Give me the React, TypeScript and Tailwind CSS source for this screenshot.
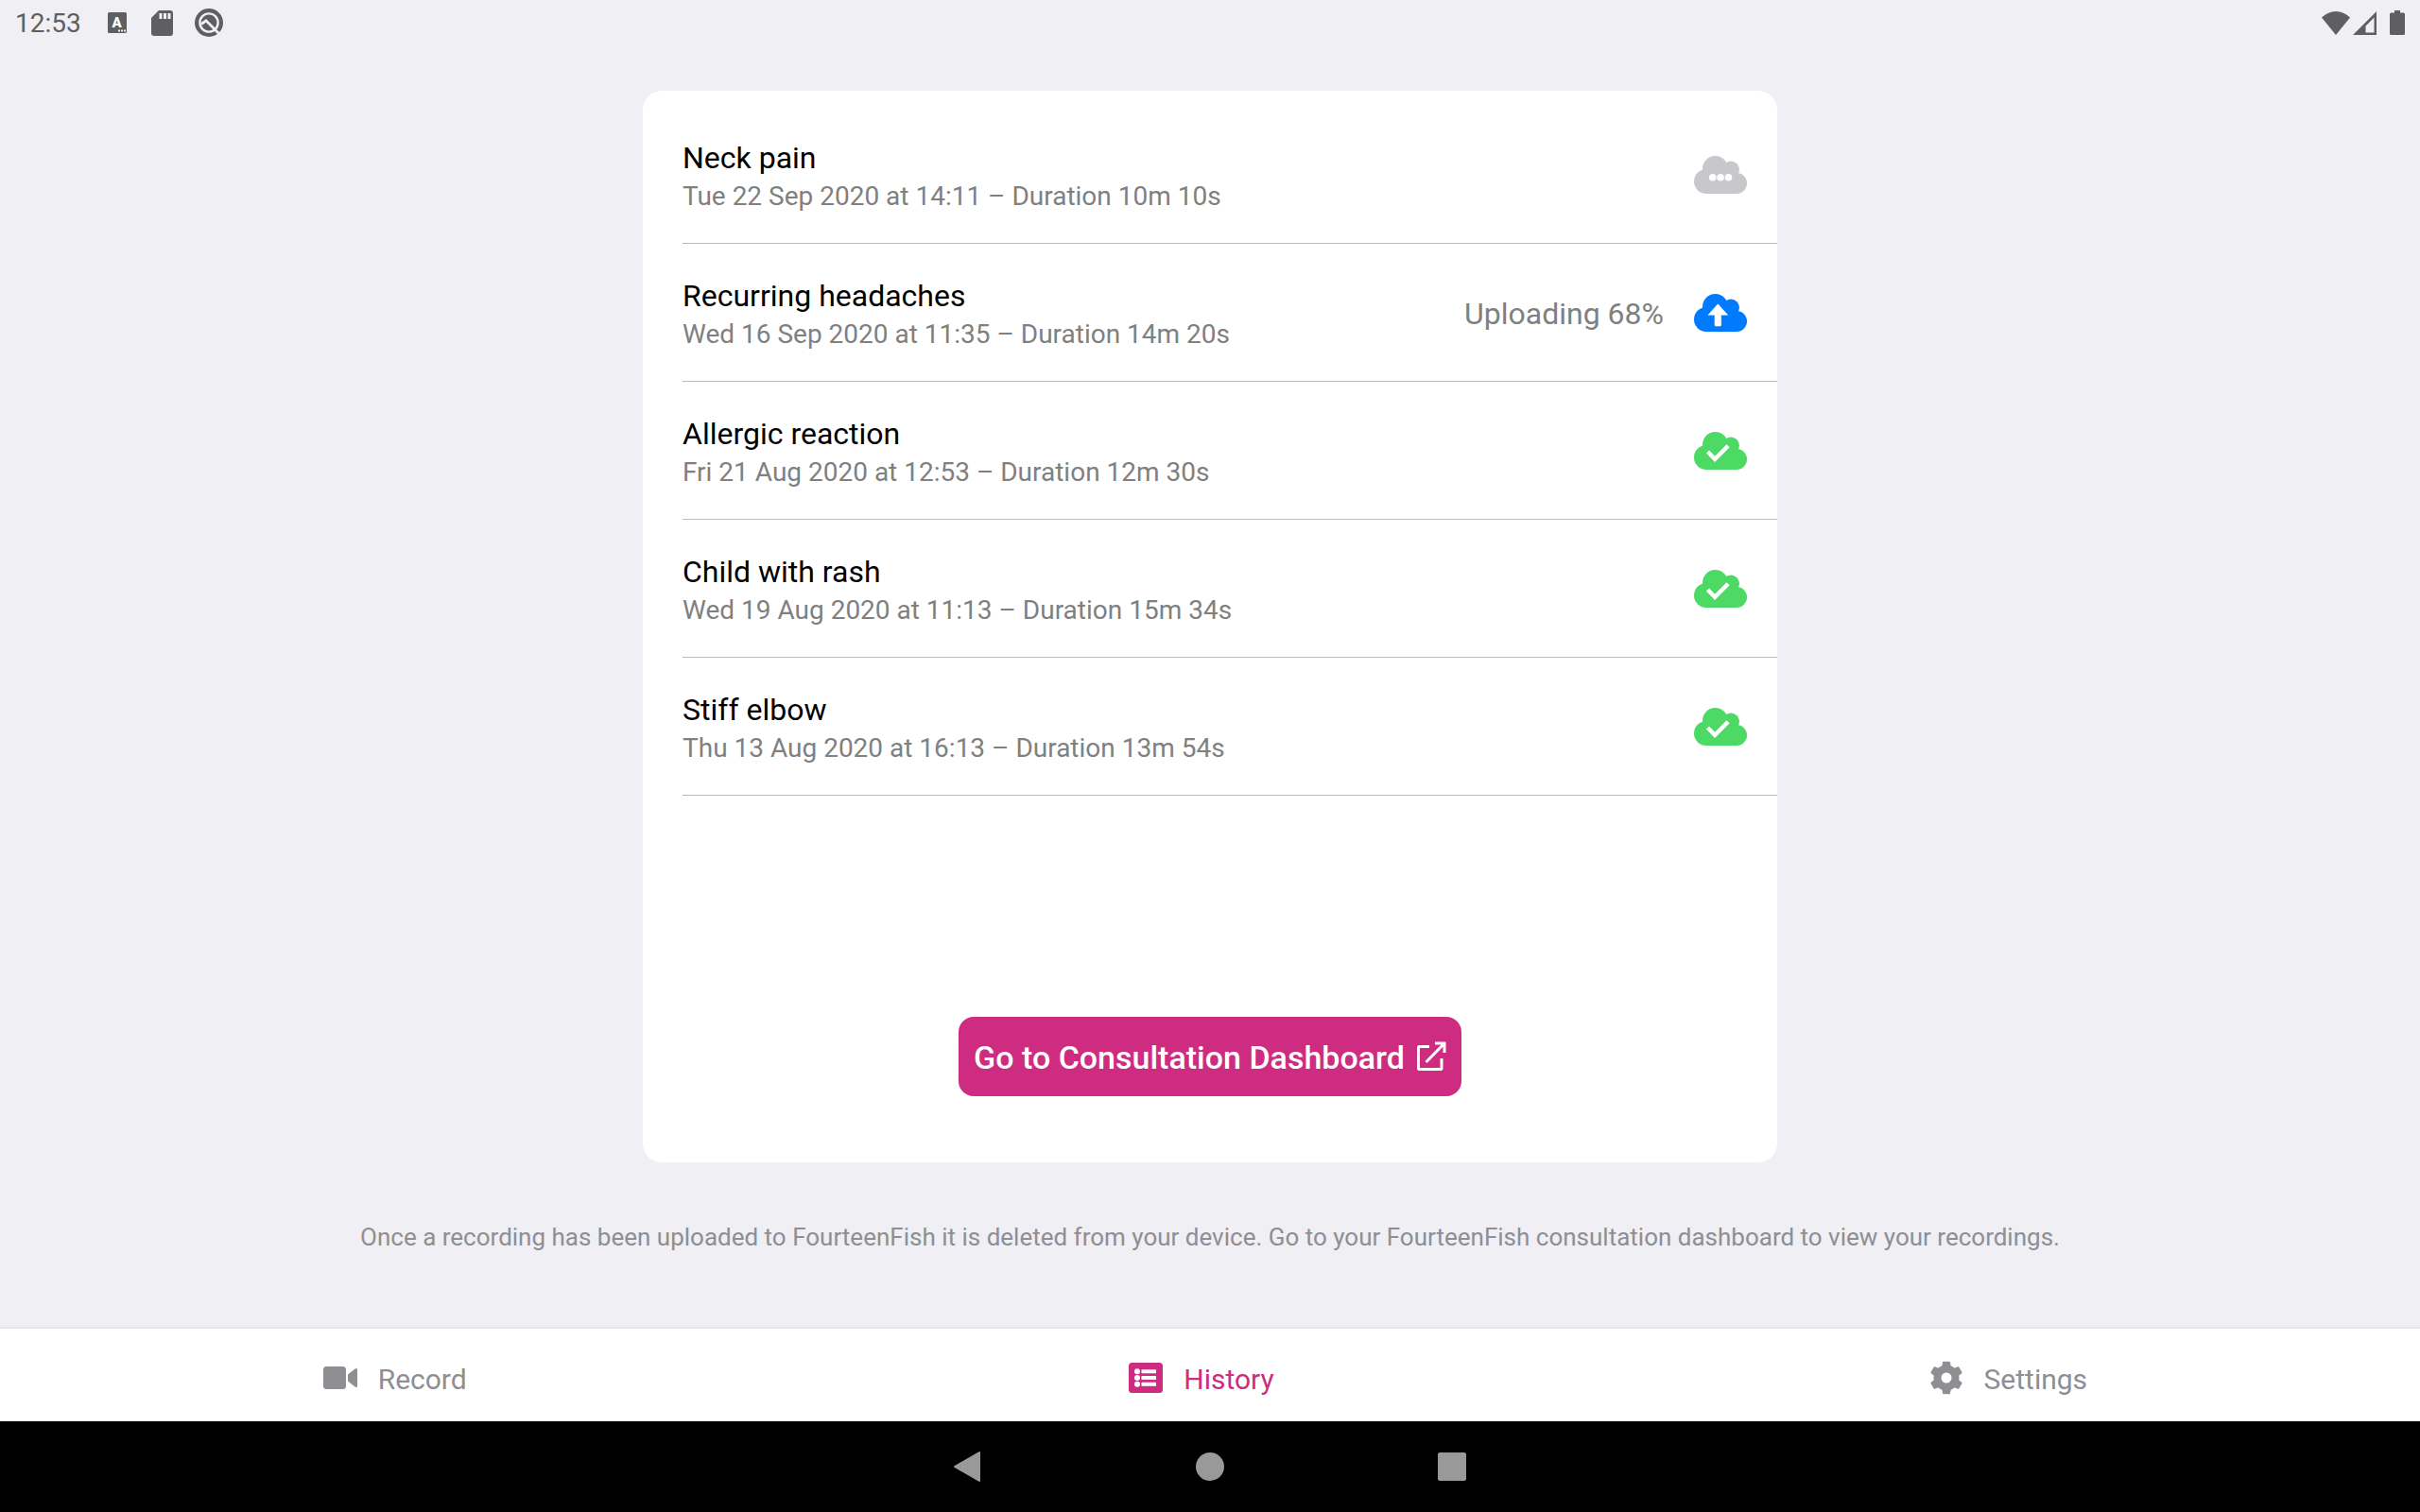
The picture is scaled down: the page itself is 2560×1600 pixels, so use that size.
import type { ReactNode } from 'react';

type Status = 'pending' | 'uploading' | 'done';

interface Recording {
  title: string;
  date: string;
  duration: string;
  status: Status;
  progress?: number;
}

const recordings: Recording[] = [
  { title: 'Neck pain', date: 'Tue 22 Sep 2020 at 14:11', duration: '10m 10s', status: 'pending' },
  { title: 'Recurring headaches', date: 'Wed 16 Sep 2020 at 11:35', duration: '14m 20s', status: 'uploading', progress: 68 },
  { title: 'Allergic reaction', date: 'Fri 21 Aug 2020 at 12:53', duration: '12m 30s', status: 'done' },
  { title: 'Child with rash', date: 'Wed 19 Aug 2020 at 11:13', duration: '15m 34s', status: 'done' },
  { title: 'Stiff elbow', date: 'Thu 13 Aug 2020 at 16:13', duration: '13m 54s', status: 'done' },
];

const cloudColors: Record<Status, string> = {
  pending: 'text-[#c7c7cc]',
  uploading: 'text-[#007aff]',
  done: 'text-[#4cd964]',
};

function CloudIcon({ status }: { status: Status }) {
  return (
    <svg viewBox="0 0 56 40" className={`h-10 w-14 shrink-0 ${cloudColors[status]}`} fill="currentColor" role="img" aria-label={status}>
      <circle cx="22.5" cy="13.5" r="13.5" />
      <circle cx="39" cy="14.5" r="9" />
      <circle cx="13" cy="27" r="13" />
      <circle cx="45" cy="29" r="11" />
      <path d="M13 18h32v22H13z" />
      {status === 'pending' && (
        <g fill="#fff">
          <circle cx="19.7" cy="22.8" r="3.8" />
          <circle cx="28.1" cy="22.8" r="3.8" />
          <circle cx="36.5" cy="22.8" r="3.8" />
        </g>
      )}
      {status === 'uploading' && (
        <path
          d="M25.3 10.8 35.6 22.2H28.6V33a1 1 0 0 1-1 1h-4.6a1 1 0 0 1-1-1V22.2H15z"
          fill="#fff"
          stroke="#fff"
          strokeWidth=".6"
          strokeLinejoin="round"
        />
      )}
      {status === 'done' && <path d="m14.5 21 7.6 7.8 14-14" fill="none" stroke="#fff" strokeWidth="4.4" />}
    </svg>
  );
}

function RecordingRow({ title, date, duration, status, progress }: Recording) {
  return (
    <li className="flex h-[146px] items-center gap-8 border-b border-[#bcbcc0] pr-8">
      <div className="flex-1 pt-0.5">
        <h2 className="text-[32px] leading-[44px] text-black">{title}</h2>
        <p className="text-[28px] leading-[38px] text-[#808080]">
          {date} – Duration {duration}
        </p>
      </div>
      {progress !== undefined && <span className="pt-0.5 text-[32px] text-[#808080]">Uploading {progress}%</span>}
      <CloudIcon status={status} />
    </li>
  );
}

function StatusBar() {
  return (
    <header className="flex h-12 items-center justify-between px-4 text-[#5f5f62]">
      <div className="flex items-center">
        <time className="pt-0.5 text-[28px]">12:53</time>
        <svg viewBox="0 0 20 22" className="ml-7 h-[22px] w-5">
          <rect width="20" height="22" rx="1.5" fill="currentColor" />
          <text x="9.5" y="15.5" textAnchor="middle" fontSize="15" fontWeight="900" fill="#fff">
            A
          </text>
          <path d="M11 18.5h2v2h-2zM14 18.5h2v2h-2zM17 18.5h2v2h-2z" fill="#efeff4" />
        </svg>
        <svg viewBox="0 0 23 27" className="ml-[26px] h-[27px] w-[23px]" fill="currentColor">
          <path d="M8 0h12a3 3 0 0 1 3 3v21a3 3 0 0 1-3 3H3a3 3 0 0 1-3-3V8z" />
          <path d="M8.5 3h3v6h-3zM13 3h3v6h-3zM17.5 3h3v6h-3z" fill="#efeff4" />
        </svg>
        <svg viewBox="0 0 32 32" className="ml-[22px] h-8 w-8" fill="none" stroke="#efeff4">
          <circle cx="16" cy="16" r="15" fill="currentColor" stroke="none" />
          <circle cx="16" cy="16" r="9.6" strokeWidth="2.4" />
          <path d="M8 17.5 13 13.800 26.500 27.500" strokeWidth="2.800" />
        </svg>
      </div>
      <div className="flex items-center">
        <svg viewBox="0 0 30 25" className="h-[25px] w-[30px]" fill="currentColor">
          <path d="M0 6.4C4.500 2.400 9.500 0 15 0s10.500 2.400 15 6.400L15 25z" />
        </svg>
        <svg viewBox="0 0 25 25" className="ml-[3px] h-[25px] w-[25px]" fill="currentColor">
          <path fillRule="evenodd" d="M25 0v25H0zM22.500 6.500 13.500 15.500V22.500H22.500z" />
        </svg>
        <svg viewBox="0 0 16 26" className="ml-[14px] h-[26px] w-4" fill="currentColor">
          <path d="M5 0h6v2.500h3.500A1.500 1.500 0 0 1 16 4v20.500a1.500 1.500 0 0 1-1.500 1.500h-13A1.500 1.500 0 0 1 0 24.500V4a1.500 1.500 0 0 1 1.500-1.500H5z" />
        </svg>
      </div>
    </header>
  );
}

function VideoIcon() {
  return (
    <svg viewBox="0 0 36 36" className="h-9 w-9" fill="currentColor">
      <rect y="6" width="24" height="24" rx="3.500" />
      <path d="M26 14.500 33.500 8.500Q36 7 36 9.500v17Q36 29 33.500 27.500L26 21.500z" />
    </svg>
  );
}

function ListIcon() {
  return (
    <svg viewBox="0 0 36 36" className="h-9 w-9" fill="currentColor">
      <rect y="2" width="36" height="32" rx="3.500" />
      <g fill="#fff">
        <circle cx="9" cy="11.200" r="3" />
        <circle cx="9" cy="18" r="3" />
        <circle cx="9" cy="24.800" r="3" />
        <rect x="13.500" y="9.200" width="15.500" height="4" rx=".6" />
        <rect x="13.500" y="16" width="15.500" height="4" rx=".6" />
        <rect x="13.500" y="22.800" width="15.500" height="4" rx=".6" />
      </g>
    </svg>
  );
}

function GearIcon() {
  return (
    <svg viewBox="0 0 36 36" className="h-9 w-9" fill="currentColor">
      <circle cx="18" cy="18" r="9.500" fill="none" stroke="currentColor" strokeWidth="8" />
      {[0, 60, 120, 180, 240, 300].map((angle) => (
        <path key={angle} transform={`rotate(${angle} 18 18)`} d="M13 8 14 1.600Q14.100.800 15 .800h6q.900 0 1 .800L23 8z" />
      ))}
    </svg>
  );
}

function Tab({ icon, label, active = false }: { icon: ReactNode; label: string; active?: boolean }) {
  return (
    <button
      type="button"
      aria-current={active ? 'page' : undefined}
      className={`flex flex-1 items-center justify-center gap-[22px] pt-1.5 pr-[18px] text-[30px] ${active ? 'text-[#ce2c80]' : 'text-[#8e8e93]'}`}
    >
      {icon}
      <span className="pt-0.5">{label}</span>
    </button>
  );
}

export default function App() {
  return (
    <div className="flex min-h-screen flex-col bg-[#efeff4] font-[Roboto,sans-serif]">
      <StatusBar />

      <main className="flex flex-1 flex-col items-center pt-12">
        <section className="flex w-full max-w-[1200px] flex-1 flex-col justify-between rounded-[20px] bg-white pt-4 pb-[70px]">
          <ul className="pl-[42px]">
            {recordings.map((recording) => (
              <RecordingRow key={recording.title} {...recording} />
            ))}
          </ul>
          <a
            href="#dashboard"
            className="flex h-[84px] items-center gap-3 self-center rounded-2xl bg-[#ce2c80] px-4 text-[34px] font-medium text-white"
          >
            <span className="pt-0.5">Go to Consultation Dashboard</span>
            <svg viewBox="0 0 32 32" className="h-8 w-8" fill="none" stroke="currentColor" strokeWidth="3">
              <path d="M14 5.500H3.500a1 1 0 0 0-1 1V28.500a1 1 0 0 0 1 1H26a1 1 0 0 0 1-1V18" />
              <path d="M20 2h10v10M29.500 2.500 10.500 22" />
            </svg>
          </a>
        </section>
        <p className="pt-[63px] pb-[79px] text-center text-[26px] leading-[32px] text-[#8e8e93]">
          Once a recording has been uploaded to FourteenFish it is deleted from your device. Go to your FourteenFish
          consultation dashboard to view your recordings.
        </p>
      </main>

      <nav className="flex h-[100px] border-t-2 border-[#e5e5ea] bg-white">
        <Tab icon={<VideoIcon />} label="Record" />
        <Tab icon={<ListIcon />} label="History" active />
        <Tab icon={<GearIcon />} label="Settings" />
      </nav>

      <footer className="flex h-24 items-center justify-center gap-[226px] bg-black text-[#999]">
        <button type="button" aria-label="Back">
          <svg viewBox="0 0 30 32" className="h-8 w-[30px]" fill="currentColor" stroke="currentColor" strokeWidth="2" strokeLinejoin="round">
            <path d="M1 16 27 1v30z" />
          </svg>
        </button>
        <button type="button" aria-label="Home" className="h-[30px] w-[30px] rounded-full bg-current" />
        <button type="button" aria-label="Recent apps" className="h-[30px] w-[30px] rounded-xs bg-current" />
      </footer>
    </div>
  );
}
